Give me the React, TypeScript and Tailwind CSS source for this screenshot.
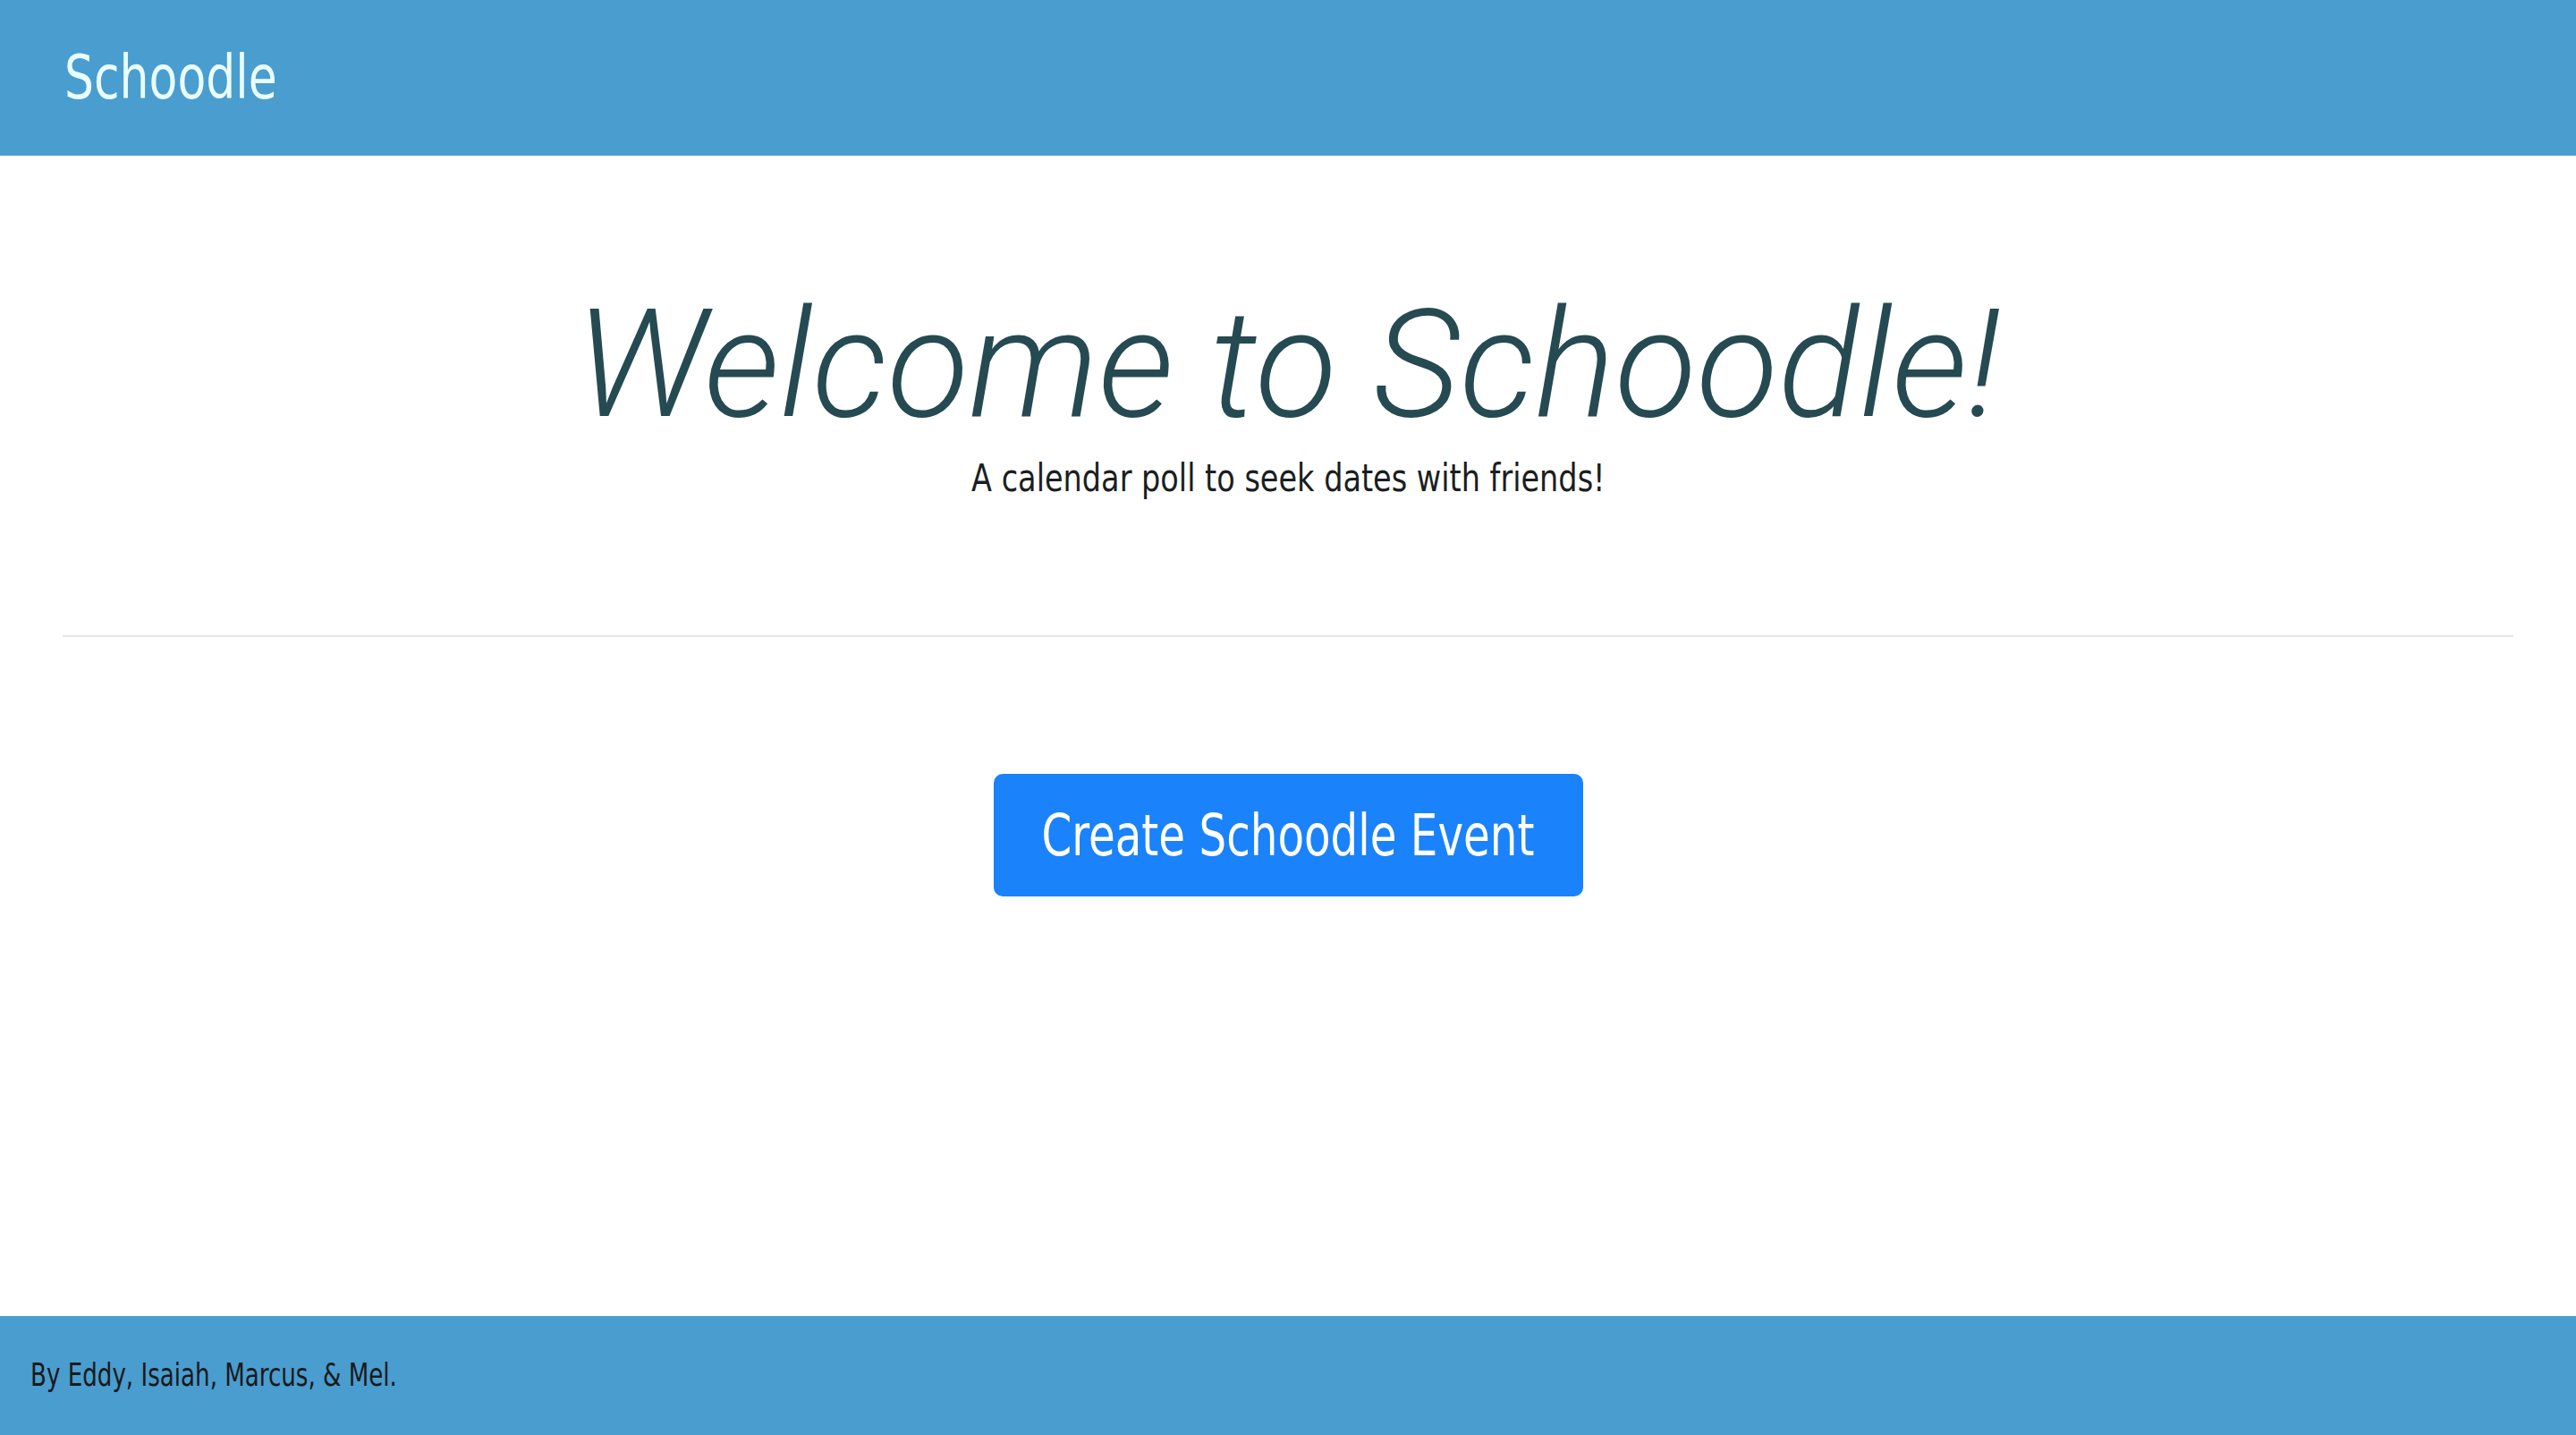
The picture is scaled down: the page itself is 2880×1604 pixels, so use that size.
import React from "react";

const cond = { fontFamily: '"Liberation Sans Narrow", "DejaVu Sans Condensed", "Roboto Condensed", sans-serif' };

export default function App() {
  return (
    <div className="flex min-h-screen flex-col bg-white" style={cond}>
      <header className="flex h-[174px] items-center bg-[#4a9dcf] px-[72px]">
        <span className="inline-block origin-left scale-x-[0.85] text-[68px] leading-none text-[#e9fdff]">Schoodle</span>
      </header>
      <main className="flex flex-1 flex-col items-center">
        <h1
          className="mt-[150px] text-[168px] font-light italic leading-none text-[#264a52]"
          style={{ fontFamily: 'Roboto, "Liberation Sans", sans-serif' }}
        >
          Welcome to Schoodle!
        </h1>
        <p className="mt-[22px] inline-block scale-x-[0.887] text-[42px] leading-none text-[#1b1e21]">
          A calendar poll to seek dates with friends!
        </p>
        <div className="mx-[70px] mt-[154px] h-[2px] self-stretch bg-[#e6e6e6]" />
        <button className="mt-[153px] flex h-[137px] w-[659px] items-center justify-center rounded-[10px] bg-[#1a82fb] text-white">
          <span className="inline-block scale-x-[0.84] text-[64px] leading-none">Create Schoodle Event</span>
        </button>
      </main>
      <footer className="flex h-[133px] items-center bg-[#4a9dcf] px-[34px]">
        <span className="inline-block origin-left scale-x-[0.83] text-[35px] leading-none text-[#1a1a1a]">
          By Eddy, Isaiah, Marcus, &amp; Mel.
        </span>
      </footer>
    </div>
  );
}
